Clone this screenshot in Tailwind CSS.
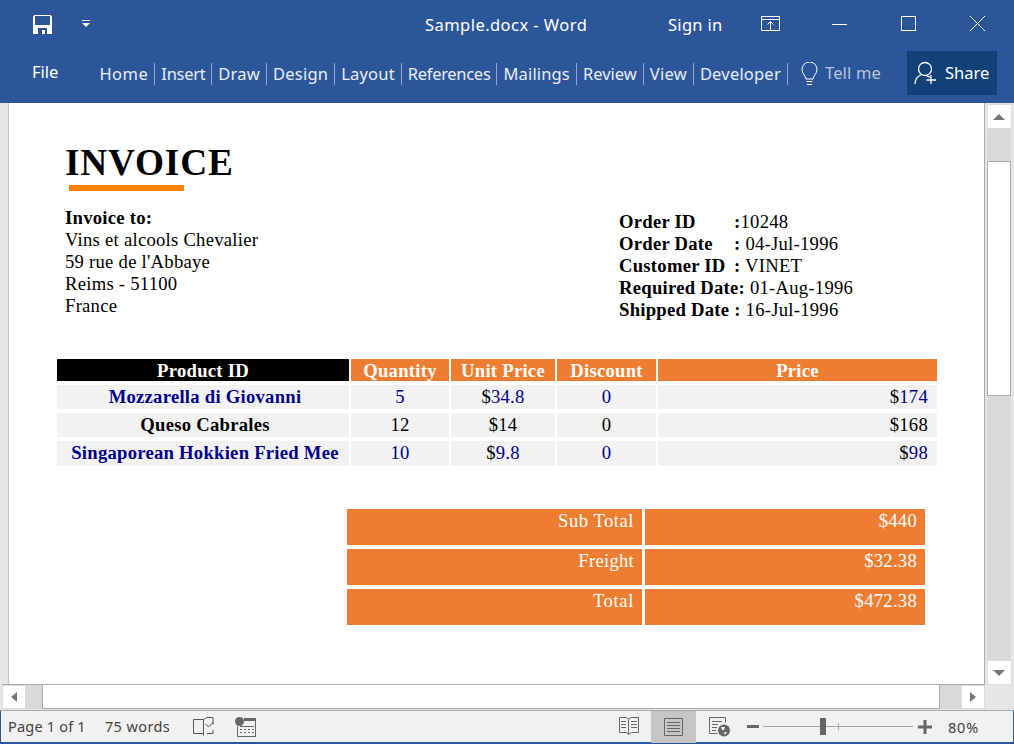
<!DOCTYPE html>
<html><head><meta charset="utf-8"><script src="https://cdn.jsdelivr.net/npm/@tailwindcss/browser@4"></script></head>
<body class="m-0 w-[1014px] h-[744px] overflow-hidden bg-[#e6e6e6] font-['Noto_Sans',sans-serif] flex flex-col">
<header class="h-[103px] bg-[#2b579a] text-white flex flex-col shrink-0">
  <div class="h-[51px] flex items-center relative">
    <svg class="ml-[33px] mt-[-3px]" width="19" height="19" viewBox="0 0 19 19"><path fill="#fff" d="M0 1.500 1.500 0h16L19 1.500V19H0Z"/><path fill="#2b579a" d="M2 1h15v9H2ZM5 13h9v6h-2v-4H9v4H5Z"/></svg>
    <svg class="ml-[30px] mt-[-3px]" width="8" height="8" viewBox="0 0 8 8"><path fill="#fff" d="M0 0h8v1H0ZM0 3h8L4 7Z"/></svg>
    <div class="absolute left-[425px] top-[14px] text-[16.500px] leading-[22px] tracking-[0.45px]">Sample.docx - Word</div>
    <div class="absolute left-[668px] top-[14px] text-[16.500px] leading-[22px] tracking-[0.3px]">Sign in</div>
    <svg class="absolute left-[761px] top-[16px]" width="19" height="16" viewBox="0 0 19 16" fill="none" stroke="#fff"><path d="M.5.500h18v14H.5ZM.5 3.500h18M9.500 14V6M6.500 8.500l3-3 3 3"/></svg>
    <div class="absolute left-[832px] top-[24px] w-[15px] h-px bg-white"></div>
    <div class="absolute left-[901px] top-[16px] w-[15px] h-[15px] border border-white"></div>
    <svg class="absolute left-[970px] top-[16px]" width="15" height="15" viewBox="0 0 15 15" stroke="#fff" fill="none"><path d="M0 0l15 15M15 0 0 15"/></svg>
  </div>
  <div class="h-[52px] flex items-start text-[16.500px] leading-[22px] relative">
    <span class="ml-[32px] mt-[10px]">File</span>
    <nav class="flex ml-[41px] mt-[11px] h-[23px] items-center text-[#e9eef6] whitespace-nowrap">
      <span class="pr-[6px] mr-[6px] border-r border-[#8ea7cc] tracking-[0.5px]">Home</span>
      <span class="pr-[6px] mr-[6px] border-r border-[#8ea7cc] tracking-[-0.3px]">Insert</span>
      <span class="pr-[6px] mr-[6px] border-r border-[#8ea7cc] tracking-[0.25px]">Draw</span>
      <span class="pr-[6px] mr-[6px] border-r border-[#8ea7cc] tracking-[0.2px]">Design</span>
      <span class="pr-[6px] mr-[6px] border-r border-[#8ea7cc] tracking-[0.2px]">Layout</span>
      <span class="pr-[6px] mr-[6px] border-r border-[#8ea7cc] tracking-[-0.3px]">References</span>
      <span class="pr-[6px] mr-[6px] border-r border-[#8ea7cc] tracking-[0.15px]">Mailings</span>
      <span class="pr-[6px] mr-[6px] border-r border-[#8ea7cc]">Review</span>
      <span class="pr-[6px] mr-[6px] border-r border-[#8ea7cc] tracking-[0.25px]">View</span>
      <span class="pr-[6px] mr-[6px] border-r border-[#8ea7cc] tracking-[0.2px]">Developer</span>
    </nav>
    <svg class="absolute left-[800px] top-[11px]" width="19" height="24" viewBox="0 0 19 24" fill="none" stroke="#fff"><path d="M6 17c0-3-4-5-4-9.500a7.500 7.500 0 0 1 15 0C17 12 13 14 13 17ZM6.500 19.500h6M7 22.500h5"/></svg>
    <span class="absolute left-[825px] top-[11px] text-[#b5c5de] tracking-[0.15px]">Tell me</span>
    <div class="absolute left-[907px] top-0 w-[90px] h-[44px] bg-[#124078] flex items-center">
      <svg class="ml-[7px]" width="24" height="24" viewBox="0 0 24 24" fill="none" stroke="#fff" stroke-width="1.300"><circle cx="11" cy="8" r="6.500"/><path d="M1 23c0-5 3-8 6.500-9.500M13 15q2 .5 3 1.500M17 14v9M12.500 19h9.500"/></svg>
      <span class="ml-[7px]">Share</span>
    </div>
  </div>
</header>
<main class="h-[607px] flex shrink-0 bg-[#e6e6e6]">
  <div class="w-[985px] flex flex-col">
    <div class="h-[581px] ml-[8px] pl-[1px] bg-white border-l border-[#c6c6c6] font-['Liberation_Serif',serif] text-black tracking-[0.25px]">
      <section class="pl-[55px] pt-[38px]">
        <h1 class="text-[37.300px] leading-[44px] font-bold tracking-[0.8px]">INVOICE</h1>
        <div class="ml-[4px] w-[115px] h-[6px] bg-[#ff8000]"></div>
        <div class="mt-[16px] flex items-start text-[18.670px] leading-[22px]">
          <div class="w-[554px]"><b>Invoice to:</b><br>Vins et alcools Chevalier<br>59 rue de l'Abbaye<br>Reims - 51100<br>France</div>
          <div class="mt-[4px] whitespace-nowrap">
            <div class="flex"><b class="w-[115px]">Order ID</b><span><b>:</b>10248</span></div>
            <div class="flex"><b class="w-[115px]">Order Date</b><span><b>:</b> 04-Jul-1996</span></div>
            <div class="flex"><b class="w-[115px]">Customer ID</b><span><b>:</b> VINET</span></div>
            <div><b>Required Date:</b> 01-Aug-1996</div>
            <div><b>Shipped Date :</b> 16-Jul-1996</div>
          </div>
        </div>
      </section>
      <section class="ml-[47px] mt-[38px] w-[880px] grid grid-cols-[292px_98px_104px_99px_279px] gap-x-[2px] text-[18.670px] text-center">
        <div class="h-[22px] leading-[24px] font-bold bg-black text-white">Product ID</div>
        <div class="h-[22px] leading-[24px] font-bold bg-[#ed7d31] text-white">Quantity</div>
        <div class="h-[22px] leading-[24px] font-bold bg-[#ed7d31] text-white">Unit Price</div>
        <div class="h-[22px] leading-[24px] font-bold bg-[#ed7d31] text-white">Discount</div>
        <div class="h-[22px] leading-[24px] font-bold bg-[#ed7d31] text-white">Price</div>

        <div class="mt-[4px] h-[24px] leading-[24px] bg-[#f2f2f2] font-bold text-[#00008b] pl-[4px]">Mozzarella di Giovanni</div>
        <div class="mt-[4px] h-[24px] leading-[24px] bg-[#f2f2f2] text-[#00008b]">5</div>
        <div class="mt-[4px] h-[24px] leading-[24px] bg-[#f2f2f2]">$<span class="text-[#00008b]">34.8</span></div>
        <div class="mt-[4px] h-[24px] leading-[24px] bg-[#f2f2f2] text-[#00008b]">0</div>
        <div class="mt-[4px] h-[24px] leading-[24px] bg-[#f2f2f2] text-right pr-[9px]">$<span class="text-[#00008b]">174</span></div>

        <div class="mt-[4px] h-[24px] leading-[24px] bg-[#f2f2f2] font-bold pl-[4px]">Queso Cabrales</div>
        <div class="mt-[4px] h-[24px] leading-[24px] bg-[#f2f2f2]">12</div>
        <div class="mt-[4px] h-[24px] leading-[24px] bg-[#f2f2f2]">$14</div>
        <div class="mt-[4px] h-[24px] leading-[24px] bg-[#f2f2f2]">0</div>
        <div class="mt-[4px] h-[24px] leading-[24px] bg-[#f2f2f2] text-right pr-[9px]">$168</div>

        <div class="mt-[4px] h-[25px] leading-[24px] bg-[#f2f2f2] font-bold text-[#00008b] pl-[4px]">Singaporean Hokkien Fried Mee</div>
        <div class="mt-[4px] h-[25px] leading-[24px] bg-[#f2f2f2] text-[#00008b]">10</div>
        <div class="mt-[4px] h-[25px] leading-[24px] bg-[#f2f2f2]">$<span class="text-[#00008b]">9.8</span></div>
        <div class="mt-[4px] h-[25px] leading-[24px] bg-[#f2f2f2] text-[#00008b]">0</div>
        <div class="mt-[4px] h-[25px] leading-[24px] bg-[#f2f2f2] text-right pr-[9px]">$<span class="text-[#00008b]">98</span></div>
      </section>
      <section class="ml-[337px] mt-[43px] w-[578px] grid grid-cols-[295px_280px] gap-x-[3px] gap-y-[4px] text-[18.670px] leading-[22px] text-right text-white">
        <div class="h-[36px] bg-[#ed7d31] pr-[8px] pt-[1px] tracking-[0.5px]">Sub Total</div><div class="h-[36px] bg-[#ed7d31] pr-[8px] pt-[1px]">$440</div>
        <div class="h-[36px] bg-[#ed7d31] pr-[8px] pt-[1px]">Freight</div><div class="h-[36px] bg-[#ed7d31] pr-[8px] pt-[1px]">$32.38</div>
        <div class="h-[36px] bg-[#ed7d31] pr-[8px] pt-[1px] tracking-[0.6px]">Total</div><div class="h-[36px] bg-[#ed7d31] pr-[8px] pt-[1px]">$472.38</div>
      </section>
    </div>
    <div class="h-[26px] flex items-stretch bg-[#e6e6e6] border-t border-[#ababab] ml-[2px]">
      <div class="w-[24px] h-[24px] bg-white border border-[#dcdcdc] flex items-center justify-center"><svg width="6" height="10" viewBox="0 0 6 10"><path fill="#777" d="M6 0v10L0 5Z"/></svg></div>
      <div class="w-[16px] h-[24px] bg-[#d9d9d9]"></div>
      <div class="w-[898px] h-[24px] bg-white border-x border-b border-[#ababab]"></div>
      <div class="w-[21px] h-[24px] bg-[#d9d9d9]"></div>
      <div class="w-[24px] h-[24px] bg-white border border-[#dcdcdc] flex items-center justify-center"><svg width="6" height="10" viewBox="0 0 6 10"><path fill="#777" d="M0 0v10l6-5Z"/></svg></div>
    </div>
  </div>
  <aside class="w-[29px] h-[582px] flex flex-col items-center border-l border-[#ababab] ml-[-1px] pl-[2px] bg-[#e6e6e6] pr-[2px]">
    <div class="w-[25px] h-[25px] mt-[1px] bg-white border border-[#dcdcdc] flex items-center justify-center"><svg width="12" height="6" viewBox="0 0 12 6"><path fill="#777" d="M0 6h12L6 0Z"/></svg></div>
    <div class="w-full h-[32px] bg-[#d9d9d9] shrink-0"></div>
    <div class="w-full h-[235px] bg-white border border-[#ababab] shrink-0"></div>
    <div class="w-full grow bg-[#d9d9d9]"></div>
    <div class="w-[25px] h-[25px] bg-white border border-[#dcdcdc] flex items-center justify-center"><svg width="12" height="6" viewBox="0 0 12 6"><path fill="#777" d="M0 0h12L6 6Z"/></svg></div>
  </aside>
</main>
<footer class="h-[34px] bg-[#f1f1f1] border-t border-[#ababab] border-b-2 border-b-[#2b579a] border-x border-x-[#2b579a] flex items-center text-[14.500px] text-[#444] relative shrink-0">
  <span class="ml-[7px] tracking-[0.2px]">Page 1 of 1</span>
  <span class="ml-[19px] tracking-[0.4px]">75 words</span>
  <svg class="ml-[23px]" width="21" height="19" viewBox="0 0 21 19" fill="none" stroke="#555"><path d="M10.500 2.500H.5v14h10v2M10.500 2.500v14M10.500 2.500 14 .5h6v7M14 16.500h6V13M12.500 7l3 3 5-5" /></svg>
  <svg class="ml-[21px]" width="21" height="20" viewBox="0 0 21 20"><circle cx="4.500" cy="4.500" r="4.500" fill="#666"/><path fill="#666" d="M9 1h12v3H9ZM2 9h1v11H2ZM2 19h19v1H2ZM20 4h1v16h-1ZM5 9h14v1H5ZM5 12h2v1H5ZM9 12h2v1H9ZM13 12h2v1h-2ZM17 12h2v1h-2ZM5 15h2v1H5ZM9 15h2v1H9ZM13 15h2v1h-2ZM17 15h2v1h-2Z"/></svg>
  <svg class="absolute left-[618px] top-[6px]" width="20" height="19" viewBox="0 0 20 19" fill="none" stroke="#666"><path d="M.5.500h7l2 1.500 3-1.500h7v15h-7l-3 2-2-2h-7ZM9.500 2v15M2 4.500h5M2 7.500h5M2 10.500h5M12 4.500h6M12 7.500h6M12 10.500h6"/></svg>
  <div class="absolute left-[650px] top-0 w-[45px] h-[32px] bg-[#c6c6c6] flex items-center justify-center"><svg width="19" height="18" viewBox="0 0 19 18" fill="none" stroke="#666"><path d="M.5.500h18v17H.5ZM3 4.500h13M3 7.500h13M3 10.500h13M3 13.500h13"/></svg></div>
  <svg class="absolute left-[708px] top-[6px]" width="21" height="20" viewBox="0 0 21 20"><path fill="none" stroke="#666" d="M.5.500h16v5M.5.500v16h8M3 4.500h10M3 7.500h6M3 10.500h5M3 13.500h4"/><circle cx="15" cy="13.500" r="6" fill="#666"/><path fill="#f1f1f1" d="M12 10h4l-1 3h-2ZM15 15h3l-2 3Z"/></svg>
  <div class="absolute left-[746px] top-[14px] w-[12px] h-[3px] bg-[#666]"></div>
  <div class="absolute left-[762px] top-[15px] w-[150px] h-px bg-[#a6a6a6]"></div>
  <div class="absolute left-[837px] top-[12px] w-px h-[7px] bg-[#a6a6a6]"></div>
  <div class="absolute left-[819px] top-[7px] w-[6px] h-[17px] bg-[#666]"></div>
  <svg class="absolute left-[917px] top-[9px]" width="14" height="14" viewBox="0 0 14 14"><path fill="#666" d="M0 5.500h14v3H0ZM5.500 0h3v14h-3Z"/></svg>
  <span class="absolute left-[947px] top-[6px] tracking-[0.8px]">80%</span>
</footer>
</body></html>
